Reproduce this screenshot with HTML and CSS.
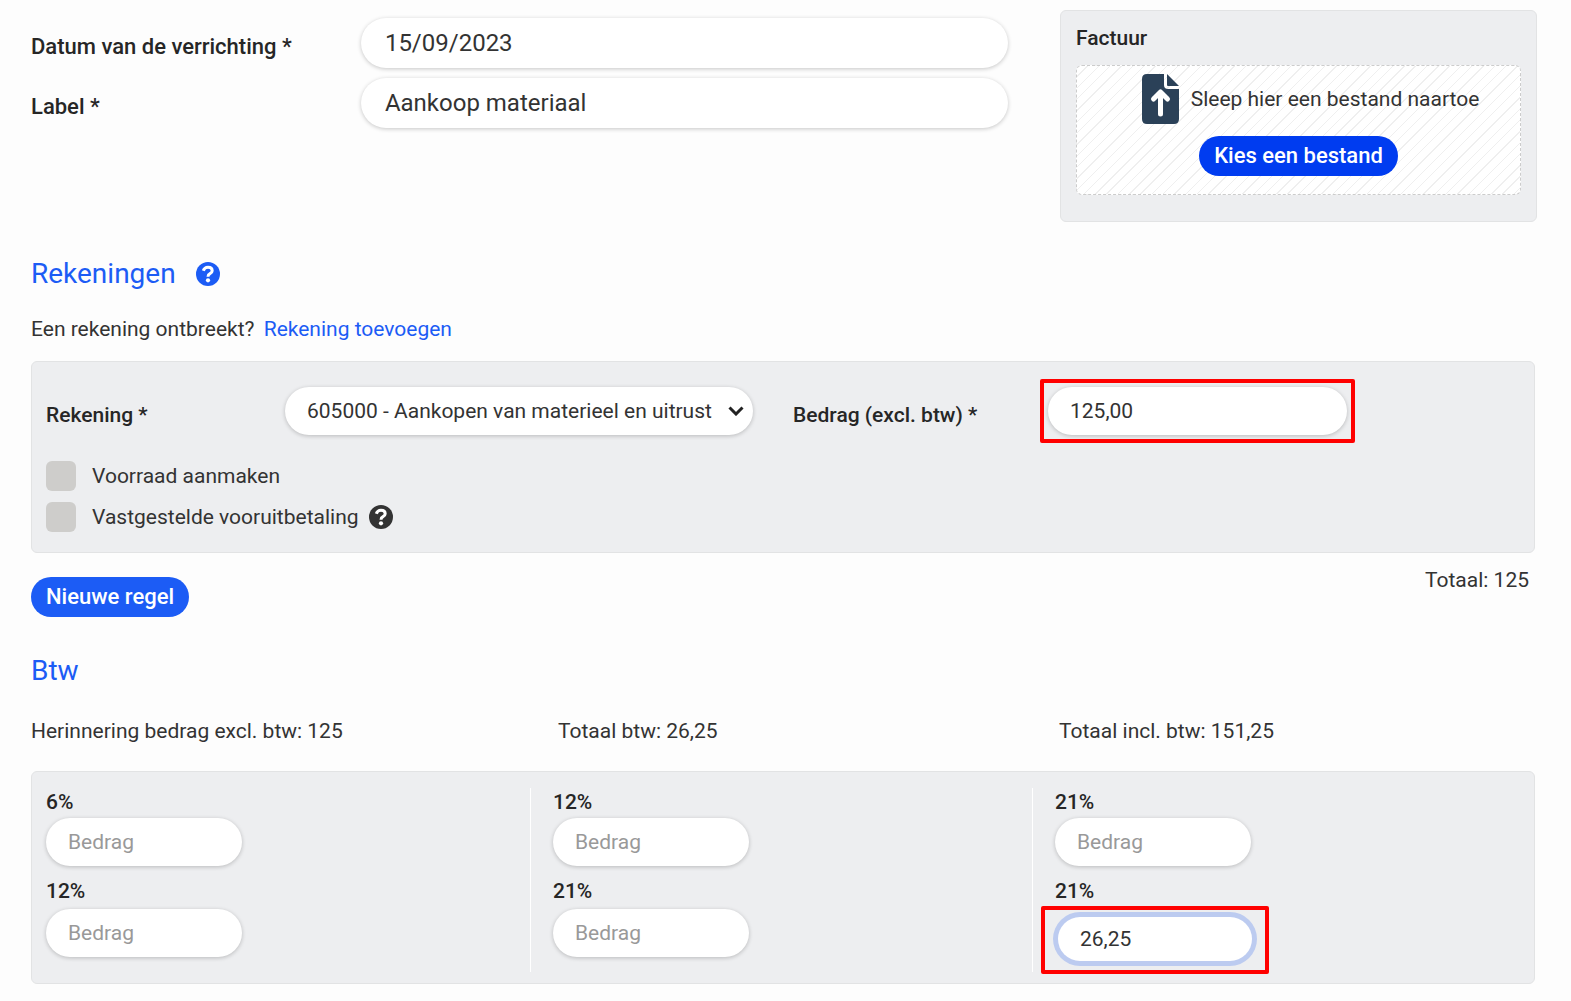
FILE: index.html
```html
<!DOCTYPE html>
<html lang="nl">
<head>
  <meta charset="utf-8">
  <title>Verrichting</title>
  <link rel="stylesheet" href="styles.css">
</head>
<body>
  <form id="verrichting">
    <div class="top">
      <div class="fields">
        <div class="field">
          <label for="datum">Datum van de verrichting *</label>
          <input class="pill" type="text" id="datum" value="15/09/2023" required>
        </div>
        <div class="field">
          <label for="label">Label *</label>
          <input class="pill" type="text" id="label" value="Aankoop materiaal" required>
        </div>
      </div>
      <div class="panel factuur">
        <h3>Factuur</h3>
        <div class="dropzone">
          <div class="drop-text">
            <svg width="37" height="50" viewBox="0 0 37 50">
              <path fill="#2b4158" d="M5 0H22V11Q22 15 26 15H37V45Q37 50 32 50H5Q0 50 0 45V5Q0 0 5 0Z"/>
              <path fill="#2b4158" d="M25 0L37 12H26Q25 12 25 11Z"/>
              <path fill="none" stroke="#fff" stroke-width="5" stroke-linecap="round" stroke-linejoin="round" d="M18.500 40V19M11.500 25L18.500 18L25.500 25"/>
            </svg>
            <span>Sleep hier een bestand naartoe</span>
          </div>
          <button type="button" class="btn btn-dark">Kies een bestand</button>
        </div>
      </div>
    </div>

    <h2>Rekeningen
      <svg class="help" width="24" height="24" viewBox="0 0 24 24">
        <circle cx="12" cy="12" r="12" fill="currentColor"/>
        <path fill="none" stroke="#fff" stroke-width="3" d="M7.300 8.800Q8.500 5.300 12 5.300Q16.200 5.300 16.200 8.800Q16.200 10.600 14 11.700Q12 12.700 12 14.800"/>
        <circle cx="12" cy="18.300" r="2.100" fill="#fff"/>
      </svg>
    </h2>
    <p class="missing">Een rekening ontbreekt? <a href="#">Rekening toevoegen</a></p>

    <div class="panel rekening">
      <div class="rekening-row">
        <label for="rekening">Rekening *</label>
        <div class="select">
          <select class="pill" id="rekening">
            <option>605000 - Aankopen van materieel en uitrust</option>
          </select>
          <svg width="16" height="10" viewBox="0 0 16 10">
            <path fill="none" stroke="#222" stroke-width="3" d="M1.500 1.500L8 8L14.500 1.500"/>
          </svg>
        </div>
        <label for="bedrag">Bedrag (excl. btw) *</label>
        <div class="marked">
          <input class="pill" type="text" id="bedrag" value="125,00" required>
        </div>
      </div>
      <div class="check">
        <input type="checkbox" id="voorraad">
        <label for="voorraad">Voorraad aanmaken</label>
      </div>
      <div class="check">
        <input type="checkbox" id="vooruit">
        <label for="vooruit">Vastgestelde vooruitbetaling</label>
        <svg class="help" width="24" height="24" viewBox="0 0 24 24">
          <circle cx="12" cy="12" r="12" fill="currentColor"/>
          <path fill="none" stroke="#fff" stroke-width="3" d="M7.300 8.800Q8.500 5.300 12 5.300Q16.200 5.300 16.200 8.800Q16.200 10.600 14 11.700Q12 12.700 12 14.800"/>
          <circle cx="12" cy="18.300" r="2.100" fill="#fff"/>
        </svg>
      </div>
    </div>
    <div class="rekening-footer">
      <button type="button" class="btn">Nieuwe regel</button>
      <span>Totaal: 125</span>
    </div>

    <h2>Btw</h2>
    <div class="btw-totals">
      <span>Herinnering bedrag excl. btw: 125</span>
      <span>Totaal btw: 26,25</span>
      <span>Totaal incl. btw: 151,25</span>
    </div>
    <div class="panel btw">
      <div class="btw-col">
        <label for="btw1">6%</label>
        <div><input class="pill" type="text" id="btw1" placeholder="Bedrag"></div>
        <label for="btw2">12%</label>
        <div><input class="pill" type="text" id="btw2" placeholder="Bedrag"></div>
      </div>
      <div class="btw-col">
        <label for="btw3">12%</label>
        <div><input class="pill" type="text" id="btw3" placeholder="Bedrag"></div>
        <label for="btw4">21%</label>
        <div><input class="pill" type="text" id="btw4" placeholder="Bedrag"></div>
      </div>
      <div class="btw-col">
        <label for="btw5">21%</label>
        <div><input class="pill" type="text" id="btw5" placeholder="Bedrag"></div>
        <label for="btw6">21%</label>
        <div class="marked"><input class="pill active" type="text" id="btw6" value="26,25"></div>
      </div>
    </div>
  </form>
</body>
</html>
```
FILE: styles.css
```css
* {
  box-sizing: border-box;
}
body {
  margin: 0;
  padding: 10px 36px 16px 31px;
  background-color: #fdfdfd;
  color: #333;
  font-family: Roboto, Arial, sans-serif;
  font-size: 21px;
  line-height: 28px;
}
h2, h3, p {
  margin: 0;
}
h2 {
  display: flex;
  align-items: center;
  gap: 20px;
  color: #1c5cf5;
  font-size: 28px;
  font-weight: 400;
  line-height: 36px;
}
h3 {
  font-size: 21px;
  line-height: 28px;
}
a {
  color: #1c5cf5;
  text-decoration: none;
}
label, h3 {
  color: #262626;
  font-weight: 500;
}
.pill {
  display: block;
  width: 100%;
  height: 48px;
  padding: 0 22px;
  border: 0;
  border-radius: 24px;
  background-color: #fff;
  box-shadow: 0 1px 4px rgba(0, 0, 0, 0.22);
  color: #333;
  font: inherit;
}
.pill::placeholder {
  color: #999;
  opacity: 1;
}
.panel {
  border: 1px solid #e2e3e4;
  border-radius: 6px;
  background-color: #edeef0;
}
.btn {
  height: 40px;
  padding: 0 15px;
  border: 0;
  border-radius: 20px;
  background-color: #1c5cf5;
  color: #fff;
  font: inherit;
  font-size: 22px;
  font-weight: 500;
}
.btn-dark {
  background-color: #003cf0;
}
.help {
  flex: none;
}

.top {
  display: grid;
  grid-template-columns: 65% 477px;
  justify-content: space-between;
  align-items: start;
  margin-right: -2px;
}
.fields {
  display: grid;
  gap: 10px;
  padding-top: 8px;
  padding-right: 2px;
}
.field {
  display: grid;
  grid-template-columns: 1fr 647px;
  align-items: center;
}
.field .pill {
  height: 50px;
  border-radius: 25px;
  padding: 0 24px;
  font-size: 24px;
}
.field label {
  padding-top: 8px;
  font-size: 22px;
}
.factuur {
  height: 212px;
  padding: 13px 15px;
}
.dropzone {
  display: flex;
  flex-direction: column;
  align-items: center;
  gap: 12px;
  height: 130px;
  margin-top: 13px;
  padding-top: 8px;
  border: 1px dashed #ccc;
  border-radius: 6px;
  background: repeating-linear-gradient(135deg, #fff 0 7px, #efefef 7px 8px);
}
.drop-text {
  display: flex;
  align-items: center;
  gap: 12px;
  padding-left: 24px;
}

.top + h2 {
  margin-top: 34px;
}
.missing {
  margin-top: 23px;
}
.missing a {
  margin-left: 4px;
}
.rekening {
  height: 192px;
  margin-top: 18px;
  padding: 25px 14px;
}
.rekening-row {
  display: grid;
  grid-template-columns: 239fr 468px 295fr 299px 173fr;
  align-items: center;
  margin-bottom: 26px;
}
.rekening-row label {
  padding-top: 7px;
}
.select + label {
  padding-left: 40px;
}
.select, .marked {
  position: relative;
}
.select select {
  appearance: none;
  padding-right: 34px;
}
.select svg {
  position: absolute;
  top: 19px;
  right: 9px;
}
/* red frame round the amounts to fill in */
.marked::after {
  content: "";
  position: absolute;
  inset: -8px;
  border: 4px solid #f00;
  border-radius: 2px;
  pointer-events: none;
}
.check {
  display: flex;
  align-items: center;
  margin-bottom: 11px;
}
.check input {
  appearance: none;
  width: 30px;
  height: 30px;
  margin: 0;
  border-radius: 6px;
  background-color: #cecdcb;
}
.check label {
  margin: 0 10px 0 16px;
  color: #333;
  font-weight: 400;
}

.rekening-footer {
  display: flex;
  justify-content: space-between;
  align-items: flex-start;
  padding-right: 6px;
}
.rekening-footer .btn {
  margin-top: 24px;
}
.rekening-footer span {
  margin-top: 13px;
}
.rekening-footer + h2 {
  margin-top: 36px;
}
.btw-totals {
  display: grid;
  grid-template-columns: 527fr 501fr 476fr;
  margin-top: 28px;
}
.btw {
  display: grid;
  grid-template-columns: 498fr 502fr 502fr;
  height: 213px;
  margin-top: 26px;
  padding: 16px 0 15px;
}
.btw-col {
  padding-left: 14px;
}
.btw-col + .btw-col {
  padding-left: 22px;
  border-left: 1px solid #fff;
}
.btw-col label {
  display: block;
}
.btw-col div {
  width: 196px;
  margin-top: 2px;
  margin-bottom: 11px;
}
.btw-col div:last-child {
  margin-top: 4px;
}
.btw-col .marked:last-child {
  width: 194px;
  margin-top: 12px;
  margin-left: 3px;
}
.btw-col .marked::after {
  inset: -11px -17px -13px;
}
.btw-col .active {
  height: 44px;
  box-shadow: 0 0 0 5px #bccbf0;
}
```
